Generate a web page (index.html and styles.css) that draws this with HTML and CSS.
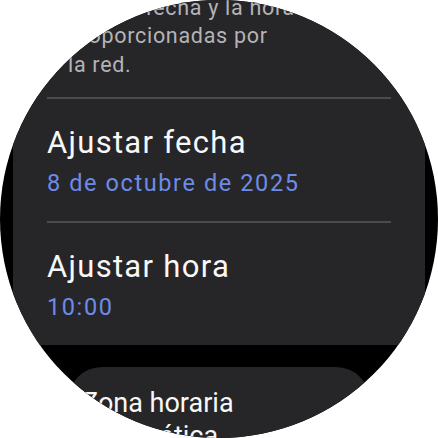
FILE: index.html
```html
<!DOCTYPE html>
<html lang="es">
<head>
<meta charset="utf-8">
<link rel="stylesheet" href="styles.css">
</head>
<body>
<div class="screen">
  <div class="list">
    <section class="card card-main">
      <p class="desc">Usar la fecha y la hora<br>proporcionadas por<br>la red.</p>
      <div class="divider"></div>
      <div class="item">
        <div class="title">Ajustar fecha</div>
        <div class="sub">8 de octubre de 2025</div>
      </div>
      <div class="divider"></div>
      <div class="item">
        <div class="title">Ajustar hora</div>
        <div class="sub">10:00</div>
      </div>
    </section>
    <section class="card card-small">
      <div class="small-title">Zona horaria<br>automática</div>
    </section>
  </div>
</div>
</body>
</html>
```
FILE: styles.css
```css
html, body {
  margin: 0;
  padding: 0;
  background: #ffffff;
}
body {
  font-family: Roboto, "Noto Sans", sans-serif;
}
.screen {
  width: 438px;
  height: 438px;
  border-radius: 50%;
  overflow: hidden;
  background: #000000;
}
.list {
  display: flex;
  flex-direction: column;
  align-items: center;
  gap: 22px;
  padding: 0 13px;
}
.card {
  background: #262628;
  box-sizing: border-box;
}
.card-main {
  align-self: stretch;
  margin-top: -40px;
  padding: 33.5px 34px 0;
  border-radius: 0 0 28px 28px;
}
.desc {
  margin: 0 0 18px 21px;
  font-size: 21.5px;
  line-height: 28.6px;
  letter-spacing: 0.7px;
  color: #b4b4b8;
  white-space: nowrap;
}
.divider {
  height: 2px;
  background: #4c4c4f;
}
.item {
  padding: 26px 0 16px;
}
.title {
  font-size: 31px;
  line-height: 36px;
  letter-spacing: 1.3px;
  color: #f8f8f8;
}
.sub {
  font-size: 23.5px;
  line-height: 44px;
  letter-spacing: 1.6px;
  color: #6d8ce8;
}
.card-small {
  width: 302px;
  height: 120px;
  border-radius: 34px;
  padding: 20px 14px 0;
}
.small-title {
  font-size: 27px;
  line-height: 33px;
  color: #f8f8f8;
  white-space: nowrap;
}
```
